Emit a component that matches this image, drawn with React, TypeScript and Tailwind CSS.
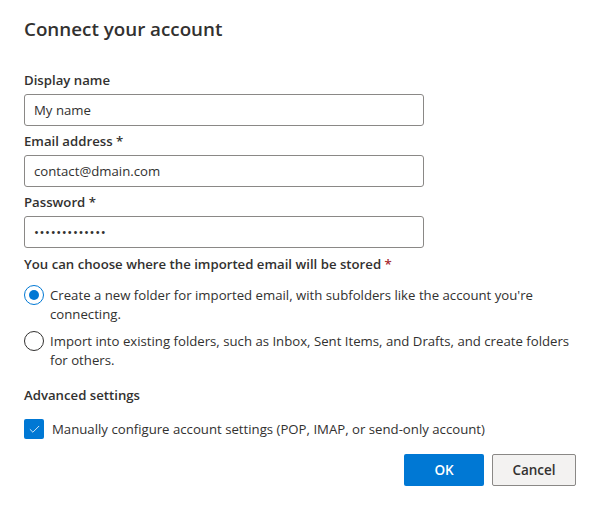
import { Check } from 'lucide-react';

function Field({ label, value, required, dots }: { label: string; value: string; required?: boolean; dots?: boolean }) {
  return (
    <div className="flex flex-col">
      <label className="text-[13.2px] leading-5 font-semibold text-[#323130]">
        {label}
        {required && ' *'}
      </label>
      <input
        readOnly
        value={value}
        className={`mt-1 w-[400px] h-8 px-[9px] border border-[#8a8886] rounded-[3px] text-[13.2px] text-[#323130] bg-white outline-none ${
          dots ? 'tracking-[0.6px]' : ''
        }`}
      />
    </div>
  );
}

function Radio({ checked, children }: { checked?: boolean; children: React.ReactNode }) {
  return (
    <div className="flex items-start gap-[6px]">
      <span
        className={`mt-[-1px] w-5 h-5 shrink-0 rounded-full border flex items-center justify-center ${
          checked ? 'border-[#0078d4]' : 'border-[#323130]'
        }`}
      >
        {checked && <span className="w-[10px] h-[10px] rounded-full bg-[#0078d4]" />}
      </span>
      <span className="text-[13.2px] leading-[18.5px] text-[#323130]">{children}</span>
    </div>
  );
}

export default function App() {
  return (
    <div className="w-[600px] h-[510px] bg-white px-6 pt-[15px] font-['Open_Sans',sans-serif] text-[#323130]">
      <h1 className="text-[18.8px] leading-7 font-semibold">Connect your account</h1>

      <div className="mt-[27px] flex flex-col gap-[5px]">
        <Field label="Display name" value="My name" />
        <Field label="Email address" value="contact@dmain.com" required />
        <Field label="Password" value="•••••••••••••" required dots />
      </div>

      <p className="mt-[6px] text-[13.2px] leading-5 font-semibold">
        You can choose where the imported email will be stored <span className="text-[#a4262c]">*</span>
      </p>

      <div className="mt-3 flex flex-col gap-[9px]">
        <Radio checked>Create a new folder for imported email, with subfolders like the account you're connecting.</Radio>
        <Radio>Import into existing folders, such as Inbox, Sent Items, and Drafts, and create folders for others.</Radio>
      </div>

      <p className="mt-[16px] text-[13.2px] leading-5 font-semibold">Advanced settings</p>

      <div className="mt-[14px] flex items-center gap-2">
        <span className="w-5 h-5 rounded-[2px] bg-[#0078d4] flex items-center justify-center">
          <Check className="w-[13px] h-[13px] text-white" strokeWidth={1.5} />
        </span>
        <span className="text-[13.2px] leading-5">Manually configure account settings (POP, IMAP, or send-only account)</span>
      </div>

      <div className="mt-[15px] flex justify-end gap-2">
        <button className="w-20 h-8 rounded-[2px] bg-[#0078d4] text-white text-[13.5px] font-semibold">OK</button>
        <button className="w-[84px] h-8 rounded-[2px] bg-[#f3f2f1] border border-[#8a8886] text-[#323130] text-[13.5px] font-semibold">
          Cancel
        </button>
      </div>
    </div>
  );
}
